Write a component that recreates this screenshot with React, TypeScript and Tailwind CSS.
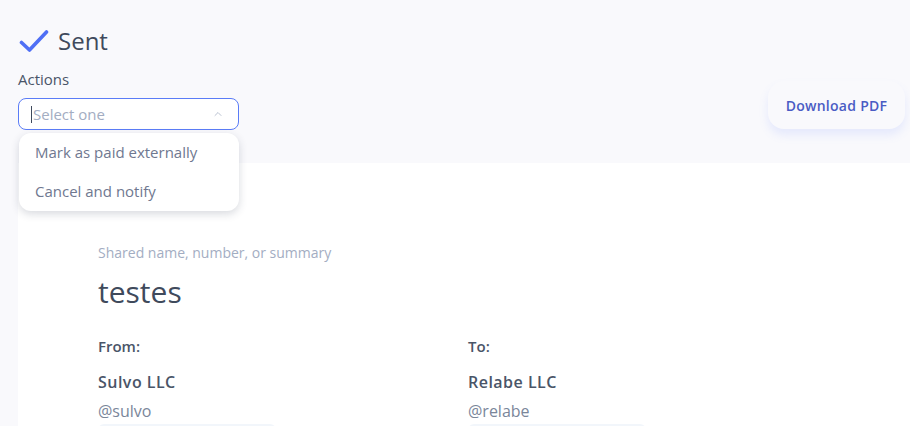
import { ChevronUp } from 'lucide-react';

function Party({ label, name, handle }: { label: string; name: string; handle: string }) {
  return (
    <div className="flex flex-col">
      <span className="text-[15px] font-semibold text-[#4a5568] leading-[20px]">{label}</span>
      <span className="mt-[16px] text-[16px] font-semibold tracking-[0.03em] text-[#4a5568] leading-[20px]">{name}</span>
      <span className="mt-[9px] text-[16px] text-[#7a869a] leading-[20px]">{handle}</span>
      <div className="mt-[3px] h-[10px] w-[178px] rounded-t-md bg-[#f2f6fb]" />
    </div>
  );
}

export default function App() {
  return (
    <div
      className="w-[910px] h-[426px] overflow-hidden bg-[#f9f9fc]"
      style={{ fontFamily: '"Open Sans", "Noto Sans", sans-serif' }}
    >
      <div className="flex justify-between pl-[18px] pr-[5px] pt-[26px]">
        <div className="flex flex-col">
          <div className="flex items-center gap-[9px]">
            <svg width="30" height="24" viewBox="0 0 30 24" fill="none" className="ml-[1px]">
              <path d="M2.5 13.5 L10.5 21 L27.5 3" stroke="#4f6ff5" strokeWidth="3.6" strokeLinecap="round" strokeLinejoin="round" />
            </svg>
            <span className="text-[24px] text-[#3f4a5c] leading-[30px]">Sent</span>
          </div>
          <span className="mt-[13px] text-[15px] text-[#4a5568] leading-[20px]">Actions</span>
          <div className="relative mt-[9px] w-[221px]">
            <div className="flex h-[32px] items-center justify-between rounded-lg border border-[#5b7cf7] bg-white pl-[12px] pr-[14px]">
              <span className="flex items-center text-[15px] text-[#a3adc2]">
                <span className="mr-[1px] h-[17px] w-px bg-[#3f4a5c]" />
                Select one
              </span>
              <ChevronUp size={12} strokeWidth={1.5} className="text-[#a3adc2]" />
            </div>
            <div className="absolute left-[1px] top-[35px] z-10 w-[220px] rounded-xl bg-white shadow-[0_3px_8px_rgba(40,50,80,0.18)]">
              <div className="flex h-[39px] items-center px-[16px] text-[15px] text-[#6f7890]">Mark as paid externally</div>
              <div className="flex h-[39px] items-center px-[16px] text-[15px] text-[#6f7890]">Cancel and notify</div>
            </div>
          </div>
        </div>
        <div className="pt-[55px]">
          <button className="h-[48px] w-[137px] rounded-2xl bg-[#f9f9fc] text-[14px] font-semibold tracking-[0.02em] text-[#4a5cc4] shadow-[0_6px_10px_rgba(110,140,255,0.14)]">
            Download PDF
          </button>
        </div>
      </div>
      <div className="ml-[18px] mt-[33px] h-[300px] bg-white pl-[80px] pt-[80px]">
        <div className="text-[14px] text-[#a3adc2] leading-[20px]">Shared name, number, or summary</div>
        <div className="mt-[11px] text-[30px] text-[#3f4a5c] leading-[36px]">testes</div>
        <div className="mt-[26px] grid w-[740px] grid-cols-2">
          <Party label="From:" name="Sulvo LLC" handle="@sulvo" />
          <Party label="To:" name="Relabe LLC" handle="@relabe" />
        </div>
      </div>
    </div>
  );
}
